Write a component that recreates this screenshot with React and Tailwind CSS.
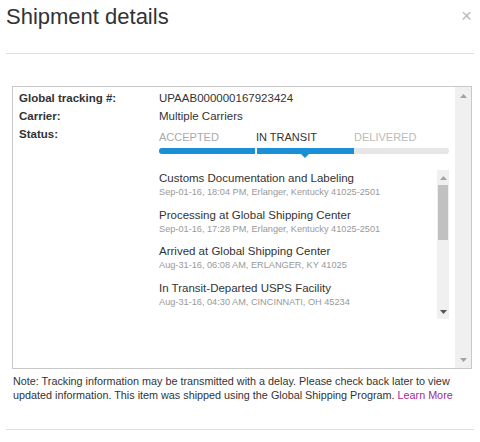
const events = [
  { title: "Customs Documentation and Labeling", meta: "Sep-01-16, 18:04 PM, Erlanger, Kentucky 41025-2501" },
  { title: "Processing at Global Shipping Center", meta: "Sep-01-16, 17:28 PM, Erlanger, Kentucky 41025-2501" },
  { title: "Arrived at Global Shipping Center", meta: "Aug-31-16, 06:08 AM, ERLANGER, KY 41025" },
  { title: "In Transit-Departed USPS Facility", meta: "Aug-31-16, 04:30 AM, CINCINNATI, OH 45234" },
];

const UpArrow = () => (
  <svg width="7" height="4" viewBox="0 0 7 4">
    <path d="M0 4 L3.5 0 L7 4 Z" fill="#a3a3a3" />
  </svg>
);

const DownArrow = ({ color = "#a3a3a3" }) => (
  <svg width="7" height="4" viewBox="0 0 7 4">
    <path d="M0 0 L3.5 4 L7 0 Z" fill={color} />
  </svg>
);

const App = () => {
  return (
    <div className="w-[480px] h-[442px] bg-white text-[#333] font-['Liberation_Sans',Arial,sans-serif]">
      <div className="flex items-start justify-between pl-[6px] pr-[8px] pt-[2px] h-[53px]">
        <h1 className="text-[22px] leading-[30px] text-[#333]">Shipment details</h1>
        <span className="text-[19px] leading-[26px] text-[#bbb] mt-[1px]">×</span>
      </div>
      <div className="mx-[6px] border-t border-[#ddd]" />

      <div className="mt-[32px] ml-[12px] w-[460px] h-[283px] border border-[#c8c8c8] flex">
        <div className="flex-1 pl-[6px] pt-[3px] text-[11.5px]">
          <div className="flex h-[18px] items-center">
            <div className="w-[140px] font-bold">Global tracking #:</div>
            <div>UPAAB000000167923424</div>
          </div>
          <div className="flex h-[18px] items-center">
            <div className="w-[140px] font-bold">Carrier:</div>
            <div>Multiple Carriers</div>
          </div>
          <div className="flex">
            <div className="w-[140px] font-bold h-[18px] flex items-center">Status:</div>
            <div className="w-[290px]">
              <div className="flex h-[22px] items-center text-[11px]">
                <div className="w-[97px] text-[#aaa]">ACCEPTED</div>
                <div className="w-[98px] text-[#333]">IN TRANSIT</div>
                <div className="text-[#bbb]">DELIVERED</div>
              </div>
              <div className="relative h-[6px] rounded-full bg-[#e6e6e6] flex">
                <div className="w-[96px] h-full bg-[#1a8fd6] rounded-l-full" />
                <div className="w-[2px] h-full bg-white" />
                <div className="w-[97px] h-full bg-[#1a8fd6]" />
                <div className="absolute left-[141px] top-[5px] w-0 h-0 border-l-[5px] border-r-[5px] border-t-[5px] border-l-transparent border-r-transparent border-t-[#1a8fd6]" />
              </div>

              <div className="mt-[16px] flex h-[149px]">
                <div className="flex-1 overflow-hidden">
                  {events.map((e) => (
                    <div key={e.title} className="h-[36.5px] pt-[1px]">
                      <div className="text-[11.5px] leading-[15px] text-[#333]">{e.title}</div>
                      <div className="text-[9.2px] leading-[12px] text-[#999]">{e.meta}</div>
                    </div>
                  ))}
                </div>
                <div className="w-[12px] bg-[#f0f0f0] flex flex-col items-center">
                  <div className="h-[15px] flex items-center">
                    <UpArrow />
                  </div>
                  <div className="w-[10px] h-[55px] bg-[#c1c1c1]" />
                  <div className="flex-1" />
                  <div className="h-[15px] flex items-center">
                    <DownArrow color="#555" />
                  </div>
                </div>
              </div>
            </div>
          </div>
        </div>
        <div className="w-[16px] bg-[#f0f0f0] flex flex-col items-center justify-between">
          <div className="h-[17px] flex items-center">
            <UpArrow />
          </div>
          <div className="h-[17px] flex items-center">
            <DownArrow />
          </div>
        </div>
      </div>

      <p className="mt-[5px] pl-[13px] pr-[6px] text-[10.8px] leading-[14px] text-[#333]">
        Note: Tracking information may be transmitted with a delay. Please check back later to view
        updated information. This item was shipped using the Global Shipping Program.{" "}
        <span className="text-[#9b2c98]">Learn More</span>
      </p>

      <div className="mt-[27px] mx-[6px] border-t border-[#ddd]" />
    </div>
  );
};

export default App;
